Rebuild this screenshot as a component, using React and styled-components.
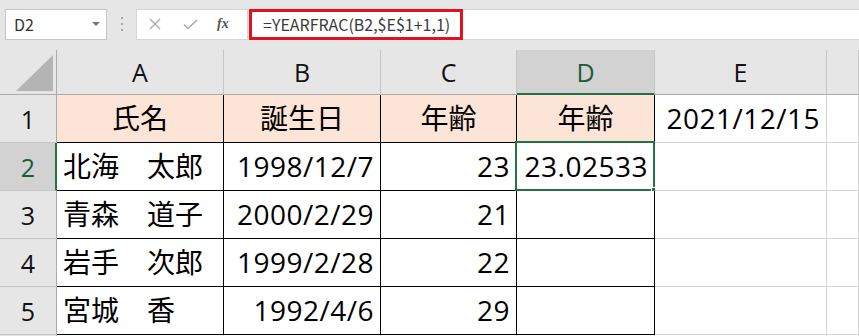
import styled, { createGlobalStyle } from 'styled-components';

const GlobalStyle = createGlobalStyle`
  html, body {
    margin: 0;
    padding: 0;
    background: #e6e6e6;
    overflow: hidden;
  }
  * {
    box-sizing: border-box;
  }
`;

const FONT = '"Open Sans", "Noto Sans CJK JP", sans-serif';
const GREEN = '#217346';

const Window = styled.div`
  width: 859px;
  height: 336px;
  overflow: hidden;
  background: #e6e6e6;
  font-family: ${FONT};
`;

const Toolbar = styled.div`
  display: flex;
  align-items: center;
  height: 50px;
  padding: 0 0 2px 5px;
`;

const NameBox = styled.div`
  display: flex;
  align-items: center;
  justify-content: space-between;
  width: 102px;
  height: 31px;
  padding: 0 6px 0 8px;
  background: #fff;
  border: 1px solid #c6c6c6;
  font-family: "Noto Sans CJK JP", sans-serif;
  font-size: 16px;
  color: #333;
`;

const DropArrow = styled.span`
  width: 0;
  height: 0;
  border-left: 4px solid transparent;
  border-right: 4px solid transparent;
  border-top: 4px solid #777;
`;

const Dots = styled.div`
  display: flex;
  flex-direction: column;
  gap: 4px;
  margin: 0 13px 0 14px;

  span {
    width: 2px;
    height: 2px;
    background: #a6a6a6;
  }
`;

const Controls = styled.div`
  display: flex;
  align-items: center;
  width: 112px;
  height: 31px;
  padding-left: 12px;
  gap: 22px;
  background: #fff;
  border: 1px solid #d4d4d4;
`;

const Fx = styled.span`
  font-family: "Liberation Serif", serif;
  font-style: italic;
  font-weight: bold;
  font-size: 14px;
  color: #555;
  margin-left: -3px;
`;

const FormulaField = styled.div`
  flex: 1;
  display: flex;
  align-items: center;
  height: 31px;
  margin-left: 1px;
  background: #fff;
  border-top: 1px solid #d4d4d4;
  border-bottom: 1px solid #d4d4d4;
`;

const Formula = styled.span`
  display: flex;
  align-items: center;
  height: 31px;
  padding: 0 10px 0 11px;
  border: 3px solid #e3111d;
  font-family: "Noto Sans CJK JP", sans-serif;
  font-size: 16px;
  color: #3a3a3a;
`;

const Sheet = styled.div`
  display: grid;
  grid-template-columns: 57px 167px 157px 136px 138px 172px 1fr;
  grid-template-rows: 45px repeat(6, 48px);
  background: #fff;
`;

const Corner = styled.div`
  position: relative;
  background: #e6e6e6;
  border-right: 1px solid #ababab;
  border-bottom: 1px solid #ababab;

  svg {
    position: absolute;
    left: 16px;
    top: 5px;
  }
`;

const ColHead = styled.div`
  display: flex;
  align-items: center;
  justify-content: center;
  background: ${(p) => (p.$active ? '#d2d2d2' : '#e6e6e6')};
  border-right: 1px solid #c6c6c6;
  border-bottom: ${(p) => (p.$active ? `2px solid ${GREEN}` : '1px solid #ababab')};
  padding-top: ${(p) => (p.$active ? '1px' : '0')};
  font-size: 25px;
  color: ${(p) => (p.$active ? '#1d5b36' : '#111')};
`;

const RowHead = styled.div`
  display: flex;
  align-items: center;
  justify-content: center;
  background: ${(p) => (p.$active ? '#d2d2d2' : '#e6e6e6')};
  border-right: ${(p) => (p.$active ? `2px solid ${GREEN}` : '1px solid #ababab')};
  border-bottom: 1px solid #c6c6c6;
  padding-left: ${(p) => (p.$active ? '1px' : '0')};
  font-size: 25px;
  color: ${(p) => (p.$active ? '#1d5b36' : '#111')};
`;

const Cell = styled.div`
  position: relative;
  display: flex;
  align-items: flex-end;
  justify-content: ${(p) =>
    p.$align === 'right' ? 'flex-end' : p.$align === 'center' ? 'center' : 'flex-start'};
  padding: 0 6px 10px 6px;
  background: ${(p) => (p.$fill ? '#fce4d6' : '#fff')};
  border-right: 1px solid ${(p) => (p.$line ? '#000' : '#d4d4d4')};
  border-bottom: 1px solid ${(p) => (p.$line ? '#000' : '#d4d4d4')};
  font-size: 28px;
  line-height: 28px;
  letter-spacing: ${(p) => (p.$num ? '0.5px' : '0')};
  color: #000;
  white-space: pre;
`;

const Selection = styled.div`
  position: absolute;
  left: -2px;
  top: -2px;
  width: 140px;
  height: 50px;
  border: 2px solid ${GREEN};
  pointer-events: none;
`;

const FillHandle = styled.div`
  position: absolute;
  left: 134px;
  top: 44px;
  width: 7px;
  height: 7px;
  background: ${GREEN};
  border: 1px solid #fff;
`;

const columns = ['A', 'B', 'C', 'D', 'E', ''];

const rows = [
  [
    { v: '氏名', align: 'center', fill: true },
    { v: '誕生日', align: 'center', fill: true },
    { v: '年齢', align: 'center', fill: true },
    { v: '年齢', align: 'center', fill: true },
    { v: '2021/12/15', align: 'right', num: true, plain: true },
  ],
  [
    { v: '北海　太郎' },
    { v: '1998/12/7', align: 'right', num: true },
    { v: '23', align: 'right', num: true },
    { v: '23.02533', align: 'right', num: true, selected: true },
    { v: '', plain: true },
  ],
  [
    { v: '青森　道子' },
    { v: '2000/2/29', align: 'right', num: true },
    { v: '21', align: 'right', num: true },
    { v: '' },
    { v: '', plain: true },
  ],
  [
    { v: '岩手　次郎' },
    { v: '1999/2/28', align: 'right', num: true },
    { v: '22', align: 'right', num: true },
    { v: '' },
    { v: '', plain: true },
  ],
  [
    { v: '宮城　香' },
    { v: '1992/4/6', align: 'right', num: true },
    { v: '29', align: 'right', num: true },
    { v: '' },
    { v: '', plain: true },
  ],
  [{ v: '', plain: true }, { v: '', plain: true }, { v: '', plain: true }, { v: '', plain: true }, { v: '', plain: true }],
];

export default function App() {
  return (
    <Window>
      <GlobalStyle />
      <Toolbar>
        <NameBox>
          D2
          <DropArrow />
        </NameBox>
        <Dots>
          <span />
          <span />
          <span />
        </Dots>
        <Controls>
          <svg width='12' height='12' viewBox='0 0 12 12'>
            <path d='M1 1 L11 11 M11 1 L1 11' stroke='#aaa' strokeWidth='1.4' fill='none' />
          </svg>
          <svg width='15' height='11' viewBox='0 0 15 11'>
            <path d='M1 5.5 L5 9.5 L14 1' stroke='#aaa' strokeWidth='1.6' fill='none' />
          </svg>
          <Fx>fx</Fx>
        </Controls>
        <FormulaField>
          <Formula>=YEARFRAC(B2,$E$1+1,1)</Formula>
        </FormulaField>
      </Toolbar>
      <Sheet>
        <Corner>
          <svg width='37' height='37' viewBox='0 0 37 37'>
            <polygon points='37,0 37,36 0,36' fill='#b4b4b4' />
          </svg>
        </Corner>
        {columns.map((c, i) => (
          <ColHead key={i} $active={c === 'D'}>
            {c}
          </ColHead>
        ))}
        {rows.map((row, r) => (
          <>
            <RowHead key={`h${r}`} $active={r === 1}>
              {r < 5 ? r + 1 : ''}
            </RowHead>
            {row.map((cell, c) => (
              <Cell
                key={`${r}-${c}`}
                $align={cell.align}
                $fill={cell.fill}
                $num={cell.num}
                $line={!cell.plain && r < 5}
              >
                {cell.v}
                {cell.selected && (
                  <Selection>
                    <FillHandle />
                  </Selection>
                )}
              </Cell>
            ))}
            <Cell key={`f${r}`} $line={false} />
          </>
        ))}
      </Sheet>
    </Window>
  );
}
